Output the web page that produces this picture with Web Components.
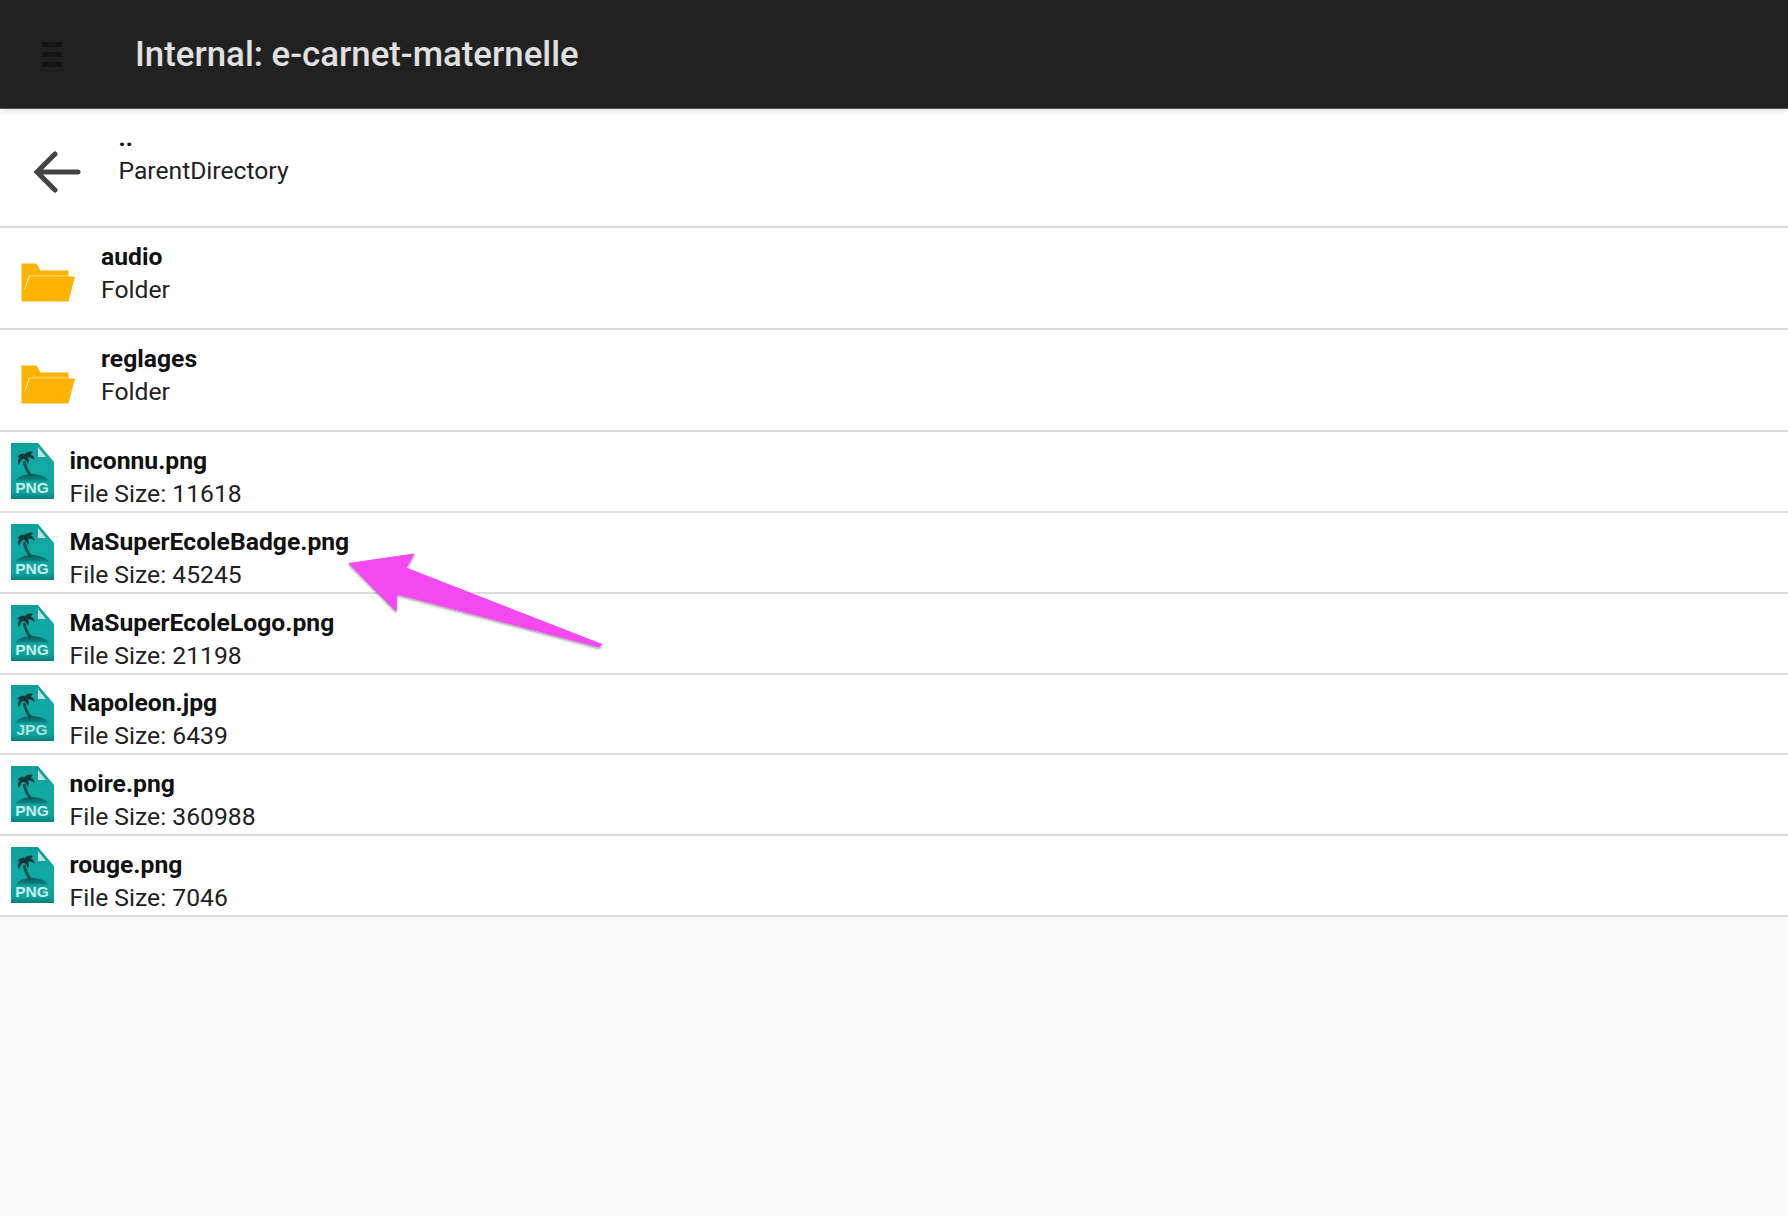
<!DOCTYPE html>
<html>
<head>
<meta charset="utf-8">
<style>
    html, body { margin: 0; height: 100%; background: #fafafa; }
    body { font-family: Roboto, "Liberation Sans", sans-serif; }
</style>
</head>
<body>
<file-browser>
    <app-bar slot="bar">Internal: e-carnet-maternelle</app-bar>
    <parent-row name=".." detail="ParentDirectory"></parent-row>
    <folder-row name="audio"></folder-row>
    <folder-row name="reglages"></folder-row>
    <file-row name="inconnu.png" size="11618" ext="PNG"></file-row>
    <file-row name="MaSuperEcoleBadge.png" size="45245" ext="PNG"></file-row>
    <file-row name="MaSuperEcoleLogo.png" size="21198" ext="PNG"></file-row>
    <file-row name="Napoleon.jpg" size="6439" ext="JPG"></file-row>
    <file-row name="noire.png" size="360988" ext="PNG"></file-row>
    <file-row name="rouge.png" size="7046" ext="PNG"></file-row>
    <call-out slot="over"></call-out>
</file-browser>

<script>
const rowText = `
    .text { display: flex; flex-direction: column; font-size: 24.7px; line-height: 33px; color: #212121; }
    .name { font-weight: 700; color: #111; }
`

class FileBrowser extends HTMLElement {
    constructor(){
        super();
        const shadowRoot = this.attachShadow({mode: 'open'});
        shadowRoot.innerHTML = `
            <style>
                :host{
                    display: block;
                    position: relative;
                    height: 1216px;
                    overflow: hidden;
                    background-color: #fafafa;
                }
                .rows{ display: flex; flex-direction: column; }
            </style>
            <slot name="bar"></slot>
            <div class="rows"><slot></slot></div>
            <slot name="over"></slot>
        `
    }
}

class AppBar extends HTMLElement {
    constructor(){
        super();
        const shadowRoot = this.attachShadow({mode: 'open'});
        shadowRoot.innerHTML = `
            <style>
                :host{
                    display: flex;
                    align-items: center;
                    position: relative;
                    z-index: 1;
                    height: 108px;
                    padding-left: 42px;
                    background-color: #212121;
                    border-bottom: 1px solid #555;
                    box-shadow: 0 2px 5px rgba(0,0,0,.12);
                }
                .menu{ display: flex; flex-direction: column; gap: 5px; width: 20px; margin-right: 73px; }
                .menu i{ display: block; height: 5px; background-color: #151515; }
                .title{ font-size: 34.8px; font-weight: 500; color: #e0e0e0; }
            </style>
            <div class="menu"><i></i><i></i><i></i></div>
            <div class="title"><slot></slot></div>
        `
    }
}

class ParentRow extends HTMLElement {
    constructor(){
        super();
        const shadowRoot = this.attachShadow({mode: 'open'});
        shadowRoot.innerHTML = `
            <style>
                :host{
                    display: flex;
                    align-items: center;
                    box-sizing: border-box;
                    height: 119px;
                    padding-left: 34px;
                    background-color: #fff;
                    border-bottom: 2px solid #ddd;
                }
                svg{ width: 47px; height: 42px; margin: 8px 37.5px 0 0; flex: none; }
                ${rowText}
                .text{ margin-bottom: 27px; letter-spacing: -.02px; }
                .dots{ color: #111; font-weight: 700; }
            </style>
            <svg viewBox="0 0 47 42" fill="none" stroke="#444" stroke-width="5" stroke-linecap="round">
                <path d="M44 21H5M21 3L3 21l18 18"/>
            </svg>
            <div class="text">
                <span class="dots">${this.getAttribute('name')}</span>
                <span>${this.getAttribute('detail')}</span>
            </div>
        `
    }
}

class FolderRow extends HTMLElement {
    constructor(){
        super();
        const shadowRoot = this.attachShadow({mode: 'open'});
        shadowRoot.innerHTML = `
            <style>
                :host{
                    display: flex;
                    align-items: center;
                    box-sizing: border-box;
                    height: 102px;
                    padding-left: 21px;
                    background-color: #fff;
                    border-bottom: 2px solid #ddd;
                }
                svg{ width: 54px; height: 39px; margin: 9px 26px 0 0; flex: none; }
                ${rowText}
                .text{ margin-top: -10px; }
            </style>
            <svg viewBox="0 0 54 39">
                <path fill="#ffb300" d="M0.500 0.500h15l4 7h28v6H54l-6.500 25H0.500z"/>
                <path fill="#ffe9b0" d="M8 12.500h39v.8H9L4 27l-.8-.5z"/>
            </svg>
            <div class="text">
                <span class="name">${this.getAttribute('name')}</span>
                <span>Folder</span>
            </div>
        `
    }
}

class FileRow extends HTMLElement {
    constructor(){
        super();
        const shadowRoot = this.attachShadow({mode: 'open'});
        const ext = this.getAttribute('ext');
        shadowRoot.innerHTML = `
            <style>
                :host{
                    display: flex;
                    align-items: center;
                    box-sizing: border-box;
                    height: 80.85px;
                    padding-left: 11px;
                    background-color: #fff;
                    border-bottom: 2px solid #ddd;
                }
                svg{ width: 43px; height: 57px; margin-right: 15.5px; flex: none; }
                ${rowText}
                .text{ margin-top: 11px; }
            </style>
            <svg viewBox="0 0 43 57">
                <defs>
                    <linearGradient id="g" x1="0" y1="0" x2="0" y2="1">
                        <stop offset="0" stop-color="#0f9f9a"/>
                        <stop offset=".45" stop-color="#12aaa5"/>
                        <stop offset=".88" stop-color="#0ea39d"/>
                        <stop offset="1" stop-color="#057f7b"/>
                    </linearGradient>
                    <linearGradient id="l" x1="0" y1="0" x2="0" y2="1">
                        <stop offset="0" stop-color="#0a5f5e"/>
                        <stop offset=".6" stop-color="#0b7a78"/>
                        <stop offset="1" stop-color="#0b7a78" stop-opacity="0"/>
                    </linearGradient>
                </defs>
                <path fill="url(#g)" d="M0 0h27l16 19v37H0z"/>
                <path fill="#c2dfdd" d="M27 4l8 10H27z"/>
                <path fill="url(#l)" d="M4 39c1-4 8-8 16-8 9 0 17 3 18 8z"/>
                <path fill="none" stroke="#0c5553" stroke-width="3" d="M13 18c1 5 3 10 7 15"/>
                <path fill="#10393a" d="M6 15c2-4 5-5 8-4 1-2 5-3 8-2-1 1-2 2-2 3 2 0 3 2 4 5-3-2-5-3-7-2 1 2 1 4 0 6-1-3-3-5-5-5-2 1-3 3-4 6-2-3-1-6 1-7-1-1-2-1-3 0z"/>
                <text x="21" y="50" text-anchor="middle" font-family="'Liberation Sans', sans-serif" font-size="15.500" font-weight="700" fill="${ext === 'JPG' ? '#a9e2de' : '#c9efec'}">${ext}</text>
            </svg>
            <div class="text">
                <span class="name">${this.getAttribute('name')}</span>
                <span>File Size: ${this.getAttribute('size')}</span>
            </div>
        `
    }
}

class CallOut extends HTMLElement {
    constructor(){
        super();
        const shadowRoot = this.attachShadow({mode: 'open'});
        shadowRoot.innerHTML = `
            <style>
                :host{ position: absolute; left: 340px; top: 540px; width: 280px; height: 120px; }
                svg{ display: block; overflow: visible; }
            </style>
            <svg width="280" height="120" viewBox="340 540 280 120">
                <defs>
                    <filter id="s" x="-10%" y="-10%" width="120%" height="130%">
                        <feDropShadow dx="0" dy="1.500" stdDeviation="1.200" flood-color="#000" flood-opacity=".4"/>
                    </filter>
                </defs>
                <path filter="url(#s)" fill="#f449f0" stroke="#f449f0" stroke-width="1" stroke-linejoin="round" d="M349 563.500L414 554l-8 14 196 76.500-3 2.500L397 594l-1 17z"/>
            </svg>
        `
    }
}

window.customElements.define('file-browser', FileBrowser)
window.customElements.define('app-bar', AppBar)
window.customElements.define('parent-row', ParentRow)
window.customElements.define('folder-row', FolderRow)
window.customElements.define('file-row', FileRow)
window.customElements.define('call-out', CallOut)
</script>
</body>
</html>
